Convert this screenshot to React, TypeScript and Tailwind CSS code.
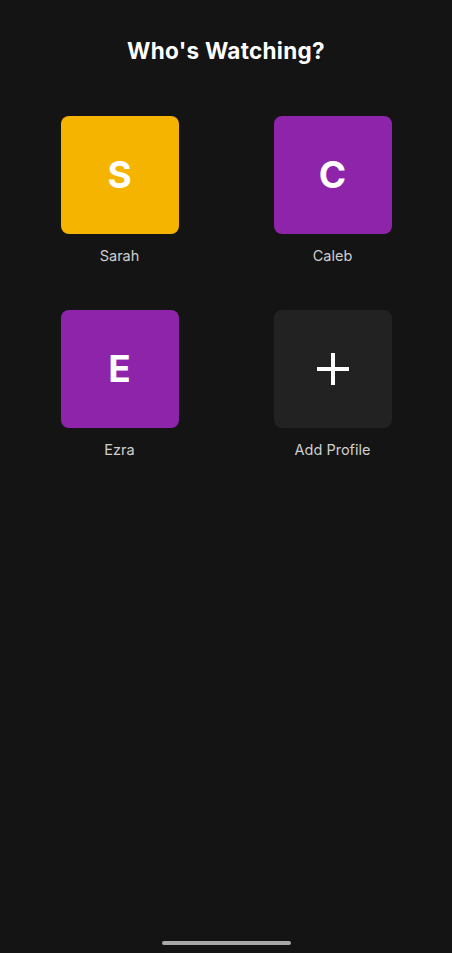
import React from "react";

const profiles = [
  { name: "Sarah", letter: "S", bg: "bg-[#f5b400]" },
  { name: "Caleb", letter: "C", bg: "bg-[#8e24aa]" },
  { name: "Ezra", letter: "E", bg: "bg-[#8e24aa]" },
];

export default function App() {
  return (
    <div
      className="w-[452px] h-[953px] bg-[#141414] flex flex-col items-center relative overflow-hidden"
      style={{ fontFamily: "Inter, 'Noto Sans', sans-serif" }}
    >
      <h1 className="mt-[36px] text-[22.5px] leading-[30px] font-bold text-white tracking-[0.3px]">
        Who's Watching?
      </h1>
      <div className="mt-[50px] w-full px-[13px] grid grid-cols-2 gap-y-[45px]">
        {profiles.map((p) => (
          <div key={p.name} className="flex flex-col items-center">
            <div
              className={`w-[118px] h-[118px] rounded-[8px] ${p.bg} flex items-center justify-center text-white text-[37px] font-bold`}
            >
              {p.letter}
            </div>
            <div className="mt-[13px] text-[14.5px] leading-[18px] text-[#cfcfcf]">{p.name}</div>
          </div>
        ))}
        <div className="flex flex-col items-center">
          <div className="w-[118px] h-[118px] rounded-[8px] bg-[#222222] flex items-center justify-center">
            <svg width="32" height="32" viewBox="0 0 32 32">
              <path d="M16 0V32M0 16H32" stroke="white" strokeWidth="4" />
            </svg>
          </div>
          <div className="mt-[13px] text-[14.5px] leading-[18px] text-[#cfcfcf]">Add Profile</div>
        </div>
      </div>
      <div className="absolute bottom-[8px] left-[162px] w-[129px] h-[4px] rounded-full bg-[#a9a9a9]" />
    </div>
  );
}
